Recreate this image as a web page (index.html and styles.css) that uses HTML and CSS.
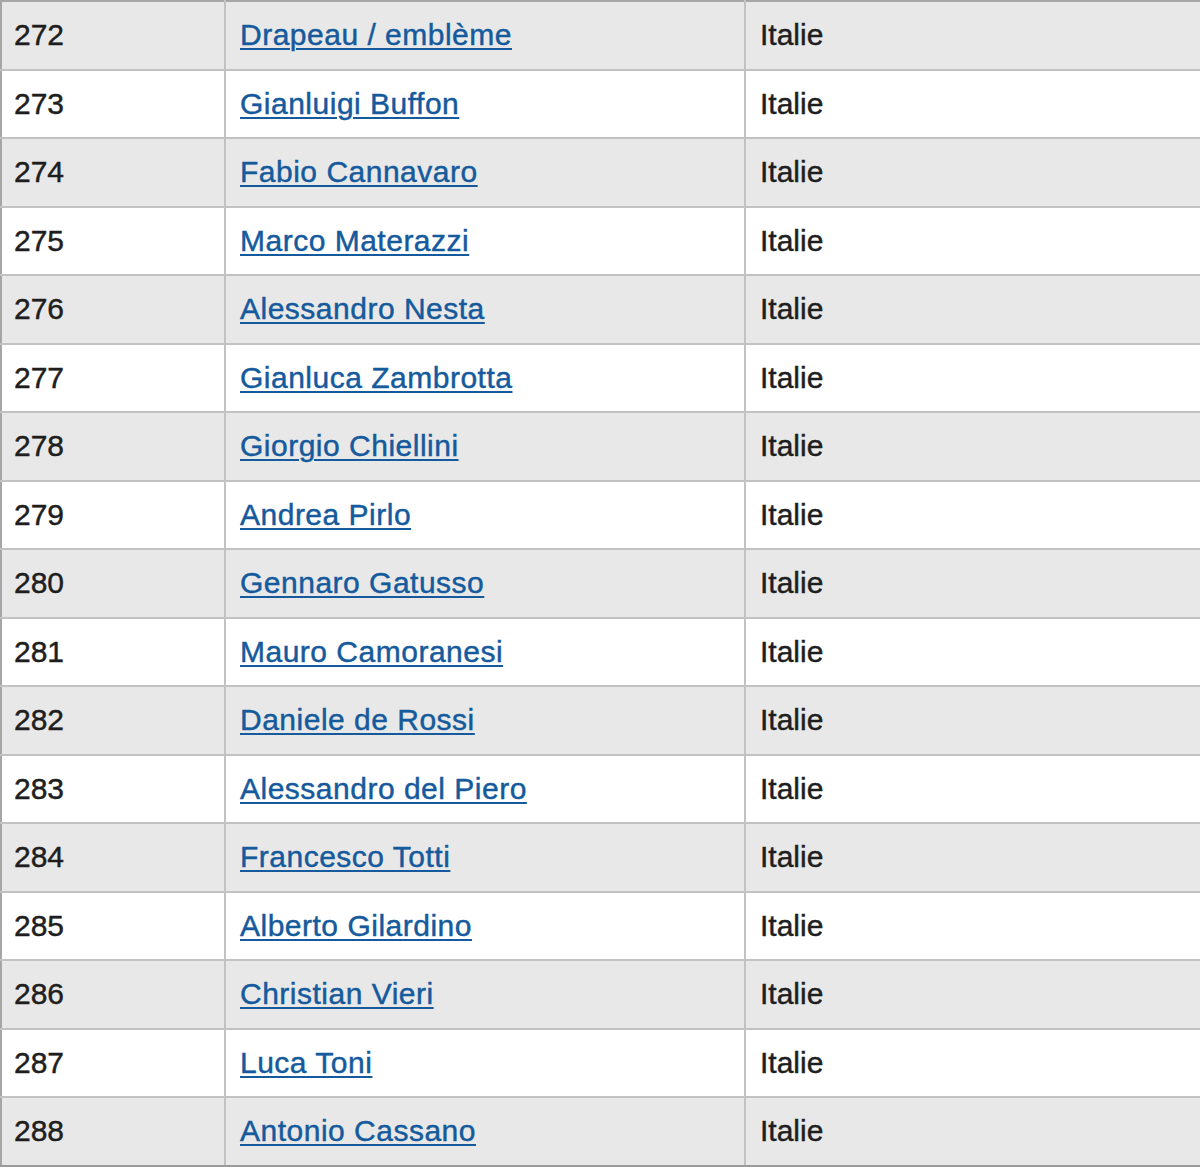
FILE: index.html
```html
<!DOCTYPE html>
<html lang="fr">
<head>
<meta charset="utf-8">
<title>Italie</title>
<link rel="stylesheet" href="styles.css">
</head>
<body>
<table class="list">
<colgroup><col class="c-num"><col class="c-name"><col class="c-country"></colgroup>
<tbody>
<tr class="alt"><td>272</td><td><a href="#">Drapeau / emblème</a></td><td>Italie</td></tr>
<tr><td>273</td><td><a href="#">Gianluigi Buffon</a></td><td>Italie</td></tr>
<tr class="alt"><td>274</td><td><a href="#">Fabio Cannavaro</a></td><td>Italie</td></tr>
<tr><td>275</td><td><a href="#">Marco Materazzi</a></td><td>Italie</td></tr>
<tr class="alt"><td>276</td><td><a href="#">Alessandro Nesta</a></td><td>Italie</td></tr>
<tr><td>277</td><td><a href="#">Gianluca Zambrotta</a></td><td>Italie</td></tr>
<tr class="alt"><td>278</td><td><a href="#">Giorgio Chiellini</a></td><td>Italie</td></tr>
<tr><td>279</td><td><a href="#">Andrea Pirlo</a></td><td>Italie</td></tr>
<tr class="alt"><td>280</td><td><a href="#">Gennaro Gatusso</a></td><td>Italie</td></tr>
<tr><td>281</td><td><a href="#">Mauro Camoranesi</a></td><td>Italie</td></tr>
<tr class="alt"><td>282</td><td><a href="#">Daniele de Rossi</a></td><td>Italie</td></tr>
<tr><td>283</td><td><a href="#">Alessandro del Piero</a></td><td>Italie</td></tr>
<tr class="alt"><td>284</td><td><a href="#">Francesco Totti</a></td><td>Italie</td></tr>
<tr><td>285</td><td><a href="#">Alberto Gilardino</a></td><td>Italie</td></tr>
<tr class="alt"><td>286</td><td><a href="#">Christian Vieri</a></td><td>Italie</td></tr>
<tr><td>287</td><td><a href="#">Luca Toni</a></td><td>Italie</td></tr>
<tr class="alt"><td>288</td><td><a href="#">Antonio Cassano</a></td><td>Italie</td></tr>
</tbody>
</table>
</body>
</html>
```
FILE: styles.css
```css
html, body {
  margin: 0;
  padding: 0;
  background: #ffffff;
}

.list {
  width: 1200px;
  table-layout: fixed;
  border-collapse: collapse;
  font-family: "Liberation Sans", Arial, sans-serif;
  font-size: 30px;
  color: #1e1e1e;
  border: 2px solid #a6a6a6;
}

.c-num { width: 224px; }
.c-name { width: 520px; }
.c-country { width: 456px; }

.list td {
  height: 66.5px;
  padding: 0 0 0 12px;
  border: 2px solid #c2c2c2;
  vertical-align: middle;
  white-space: nowrap;
  -webkit-text-stroke: 0.45px currentColor;
}

.list td + td { padding-left: 14px; }

.list td:first-child { border-left-color: #a6a6a6; }
.list td:last-child { border-right-color: #8e8e8e; }
.list tr:first-child td { border-top-color: #a6a6a6; }
.list tr:last-child td { border-bottom-color: #9a9a9a; }

.list tr.alt td { background: #e8e8e8; }

.list a {
  color: #155a9c;
  letter-spacing: 0.5px;
  text-decoration: underline;
  text-decoration-thickness: 2px;
  text-underline-offset: 3px;
}
```
